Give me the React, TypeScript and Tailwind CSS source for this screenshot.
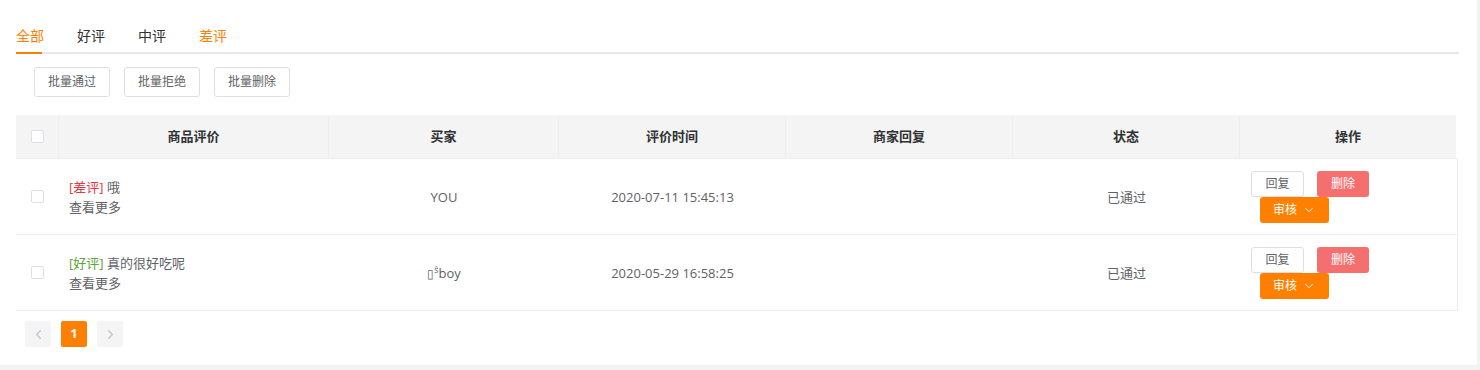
import React from "react";
import { ChevronDown, ChevronLeft, ChevronRight } from "lucide-react";

const tabs = ["全部", "好评", "中评", "差评"];

const columns = [
	{ title: "商品评价", w: "w-[270px]" },
	{ title: "买家", w: "w-[230px]" },
	{ title: "评价时间", w: "w-[227px]" },
	{ title: "商家回复", w: "w-[227px]" },
	{ title: "状态", w: "w-[227px]" },
	{ title: "操作", w: "w-[216px]" },
];

const rows = [
	{
		tag: "[差评]",
		tagColor: "text-[#e8343f]",
		content: "哦",
		buyer: "YOU",
		time: "2020-07-11 15:45:13",
		status: "已通过",
	},
	{
		tag: "[好评]",
		tagColor: "text-[#5aa537]",
		content: "真的很好吃呢",
		buyer: "",
		time: "2020-05-29 16:58:25",
		status: "已通过",
	},
];

const Checkbox = () => (
	<span className="block w-[13px] h-[13px] border border-[#dcdfe6] rounded-[2px] bg-white" />
);

const App = () => {
	return (
		<div
			className="w-[1480px] h-[370px] bg-[#f3f3f3]"
			style={{ fontFamily: '"Open Sans", "Noto Sans CJK SC", sans-serif' }}
		>
			<div className="w-[1477px] h-[365px] bg-white pl-[16px] pr-[18px]">
				{/* tabs */}
				<div className="flex gap-[33px] pt-[26px] border-b-2 border-[#e4e7ed]">
					{tabs.map((t, i) => (
						<div
							key={t}
							className={`relative text-[14px] leading-[20px] pb-[6px] ${
								i === 0 || i === 3 ? "text-[#ff8000]" : "text-[#303133]"
							}`}
						>
							{t}
							{i === 0 && (
								<span className="absolute left-0 -bottom-[2px] h-[2px] w-[26px] bg-[#ff8000]" />
							)}
						</div>
					))}
				</div>

				{/* batch buttons */}
				<div className="flex gap-[14px] pl-[18px] mt-[13px]">
					{["批量通过", "批量拒绝", "批量删除"].map((b) => (
						<button
							key={b}
							className="h-[30px] w-[76px] border border-[#dcdfe6] rounded-[3px] bg-white text-[12px] text-[#606266]"
						>
							{b}
						</button>
					))}
				</div>

				{/* table */}
				<div className="mt-[18px] w-[1442px] text-[13px] text-[#606266]">
					<div className="flex h-[44px] border-b border-[#ebeef5]">
						<div className="w-[43px] bg-[#f4f4f4] border-r border-[#ebeef5] flex items-center justify-center">
							<Checkbox />
						</div>
						{columns.map((c, i) => (
							<div
								key={c.title}
								className={`${c.w} bg-[#f4f4f4] flex items-center justify-center font-bold text-[#303133] ${
									i < columns.length - 1 ? "border-r border-[#ebeef5]" : ""
								}`}
							>
								{c.title}
							</div>
						))}
					</div>

					{rows.map((r, idx) => (
						<div key={idx} className="flex h-[76px] border-b border-r border-[#ebeef5]">
							<div className="w-[43px] flex items-center justify-center">
								<Checkbox />
							</div>
							<div className="w-[270px] px-[10px] flex flex-col justify-center leading-[20px]">
								<div>
									<span className={r.tagColor}>{r.tag}</span> {r.content}
								</div>
								<div>查看更多</div>
							</div>
							<div className="w-[230px] flex items-center justify-center pt-[2px]">
								{r.buyer ? (
									r.buyer
								) : (
									<span>
										<span className="text-[12px]">▯</span>
										<span className="text-[9px] align-super">ŝ</span>
										boy
									</span>
								)}
							</div>
							<div className="w-[227px] flex items-center justify-center pt-[2px]">{r.time}</div>
							<div className="w-[227px]" />
							<div className="w-[227px] flex items-center justify-center pt-[2px]">{r.status}</div>
							<div className="flex-1 pl-[11px] flex flex-col justify-center text-[12px]">
								<div className="flex gap-[13px]">
									<button className="h-[26px] w-[53px] border border-[#dcdfe6] rounded-[3px] bg-white text-[#606266]">
										回复
									</button>
									<button className="h-[26px] w-[52px] rounded-[3px] bg-[#f56f6f] text-white">
										删除
									</button>
								</div>
								<button className="ml-[9px] h-[26px] w-[69px] rounded-[3px] bg-[#ff8000] text-white flex items-center justify-center gap-[5px]">
									审核
									<ChevronDown size={14} strokeWidth={1.6} />
								</button>
							</div>
						</div>
					))}
				</div>

				{/* pagination */}
				<div className="flex gap-[10px] pl-[9px] mt-[10px]">
					<div className="w-[26px] h-[26px] rounded-[2px] bg-[#f4f4f5] flex items-center justify-center text-[#c0c4cc]">
						<ChevronLeft size={15} strokeWidth={2.2} />
					</div>
					<div className="w-[26px] h-[26px] rounded-[2px] bg-[#ff8000] flex items-center justify-center text-white text-[13px] font-bold">
						1
					</div>
					<div className="w-[26px] h-[26px] rounded-[2px] bg-[#f4f4f5] flex items-center justify-center text-[#c0c4cc]">
						<ChevronRight size={15} strokeWidth={2.2} />
					</div>
				</div>
			</div>
		</div>
	);
};

export default App;
